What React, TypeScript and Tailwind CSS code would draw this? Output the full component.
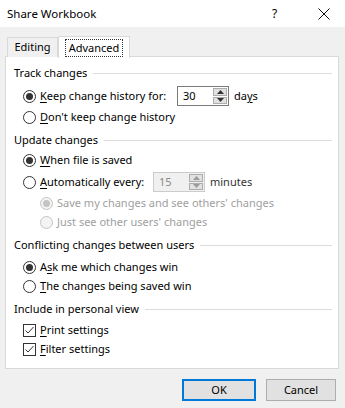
import React from "react";

const font = { fontFamily: '"Noto Sans", "Open Sans", sans-serif' };

function U({ children }: { children: React.ReactNode }) {
  return <span className="underline underline-offset-2 decoration-1">{children}</span>;
}

function Radio({ checked, disabled }: { checked?: boolean; disabled?: boolean }) {
  const border = disabled ? "border-[#c4c4c4]" : "border-[#333333]";
  const dot = disabled ? "bg-[#c4c4c4]" : "bg-[#333333]";
  return (
    <span
      className={`w-[13px] h-[13px] rounded-full border ${border} ${
        disabled ? "bg-[#f4f4f4]" : "bg-white"
      } flex items-center justify-center shrink-0`}
    >
      {checked && <span className={`w-[7px] h-[7px] rounded-full ${dot}`} />}
    </span>
  );
}

function Check() {
  return (
    <span className="w-[13px] h-[13px] border border-[#333333] bg-white flex items-center justify-center shrink-0">
      <svg width="11" height="11" viewBox="0 0 11 11">
        <path d="M1.5 5.5 L4 8 L9.5 2" fill="none" stroke="#333333" strokeWidth="1" />
      </svg>
    </span>
  );
}

function Spin({ value, disabled }: { value: string; disabled?: boolean }) {
  const arrow = disabled ? "#9a9a9a" : "#333333";
  return (
    <div
      className={`w-[52px] h-[20px] border flex shrink-0 ${
        disabled ? "border-[#cccccc] bg-[#f0f0f0]" : "border-[#7a7a7a] bg-white"
      }`}
    >
      <div
        className={`flex-1 pl-[5px] flex items-center text-[11px] ${
          disabled ? "text-[#8a8a8a] bg-[#f0f0f0]" : "text-black"
        }`}
      >
        {value}
      </div>
      <div className="w-[15px] flex flex-col gap-px py-px pr-px">
        <div className="flex-1 bg-[#e1e1e1] border border-[#adadad] flex items-center justify-center">
          <svg width="7" height="4" viewBox="0 0 7 4">
            <path d="M0 4 L3.5 0 L7 4 Z" fill={arrow} />
          </svg>
        </div>
        <div className="flex-1 bg-[#e1e1e1] border border-[#adadad] flex items-center justify-center">
          <svg width="7" height="4" viewBox="0 0 7 4">
            <path d="M0 0 L3.5 4 L7 0 Z" fill={arrow} />
          </svg>
        </div>
      </div>
    </div>
  );
}

function Heading({ text, className = "" }: { text: string; className?: string }) {
  return (
    <div className={`h-[20px] flex items-center pl-[8px] pr-[6px] whitespace-nowrap ${className}`}>
      <span className="pr-[6px]">{text}</span>
      <span className="flex-1 h-px bg-[#dcdcdc]" />
    </div>
  );
}

function Row({
  children,
  className = "",
  indent = false,
}: {
  children: React.ReactNode;
  className?: string;
  indent?: boolean;
}) {
  return (
    <div
      className={`flex items-center whitespace-nowrap ${
        indent ? "pl-[34px]" : "pl-[17px]"
      } gap-[4px] ${className}`}
    >
      {children}
    </div>
  );
}

export default function App() {
  return (
    <div
      className="w-[345px] h-[408px] bg-[#f0f0f0] text-[11px] text-black overflow-hidden"
      style={font}
    >
      {/* Title bar */}
      <div className="h-[27px] bg-white flex items-center pl-[7px]">
        <span className="flex-1 text-[11.5px]">Share Workbook</span>
        <span className="w-[20px] text-[12px] mr-[26px]">?</span>
        <svg width="12" height="12" viewBox="0 0 12 12" className="mr-[15px]">
          <path d="M0.5 0.5 L11.5 11.5 M11.5 0.5 L0.5 11.5" stroke="#111" strokeWidth="1" />
        </svg>
      </div>

      {/* Tabs */}
      <div className="flex items-end pl-[7px] mt-[8px] h-[22px] relative z-10">
        <div className="h-[20px] w-[51px] border border-b-0 border-[#d9d9d9] bg-[#f0f0f0] flex items-center justify-center">
          Editing
        </div>
        <div className="h-[22px] w-[72px] border border-b-0 border-[#d9d9d9] bg-white flex items-center justify-center -mb-px">
          <span className="border border-dotted border-[#333] px-[3px] leading-[16px]">
            Advanced
          </span>
        </div>
      </div>

      {/* Panel */}
      <div className="mx-[5px] w-[334px] h-[313px] -mt-px bg-white border border-[#d9d9d9] pt-[6px]">
        <Heading text="Track changes" />
        <Row className="h-[22px] mt-[2px]">
          <Radio checked />
          <span className="w-[133px]">
            <U>K</U>eep change history for:
          </span>
          <Spin value="30" />
          <span className="ml-[1px]">
            da<U>y</U>s
          </span>
        </Row>
        <Row className="h-[20px]">
          <Radio />
          <span>
            <U>D</U>on't keep change history
          </span>
        </Row>

        <Heading text="Update changes" className="mt-[3px]" />
        <Row className="h-[21px]">
          <Radio checked />
          <span>
            <U>W</U>hen file is saved
          </span>
        </Row>
        <Row className="h-[22px]">
          <Radio />
          <span className="w-[109px]">
            <U>A</U>utomatically every:
          </span>
          <Spin value="15" disabled />
          <span className="ml-[1px] text-[#333]">minutes</span>
        </Row>
        <Row indent className="h-[20px] text-[#a0a0a0]">
          <Radio checked disabled />
          <span>Save my changes and see others' changes</span>
        </Row>
        <Row indent className="h-[19px] text-[#a0a0a0]">
          <Radio disabled />
          <span>Just see other users' changes</span>
        </Row>

        <Heading text="Conflicting changes between users" className="mt-[3px]" />
        <Row className="h-[20px] mt-[2px]">
          <Radio checked />
          <span>
            A<U>s</U>k me which changes win
          </span>
        </Row>
        <Row className="h-[19px]">
          <Radio />
          <span>
            <U>T</U>he changes being saved win
          </span>
        </Row>

        <Heading text="Include in personal view" className="mt-[3px]" />
        <Row className="h-[20px] mt-px">
          <Check />
          <span>
            <U>P</U>rint settings
          </span>
        </Row>
        <Row className="h-[19px]">
          <Check />
          <span>
            <U>F</U>ilter settings
          </span>
        </Row>
      </div>

      {/* Buttons */}
      <div className="flex justify-end gap-[10px] pr-[9px] mt-[10px]">
        <button className="w-[74px] h-[22px] bg-[#e1e1e1] border-2 border-[#0078d7] flex items-center justify-center">
          OK
        </button>
        <button className="w-[70px] h-[22px] bg-[#e1e1e1] border border-[#adadad] flex items-center justify-center">
          Cancel
        </button>
      </div>
    </div>
  );
}
